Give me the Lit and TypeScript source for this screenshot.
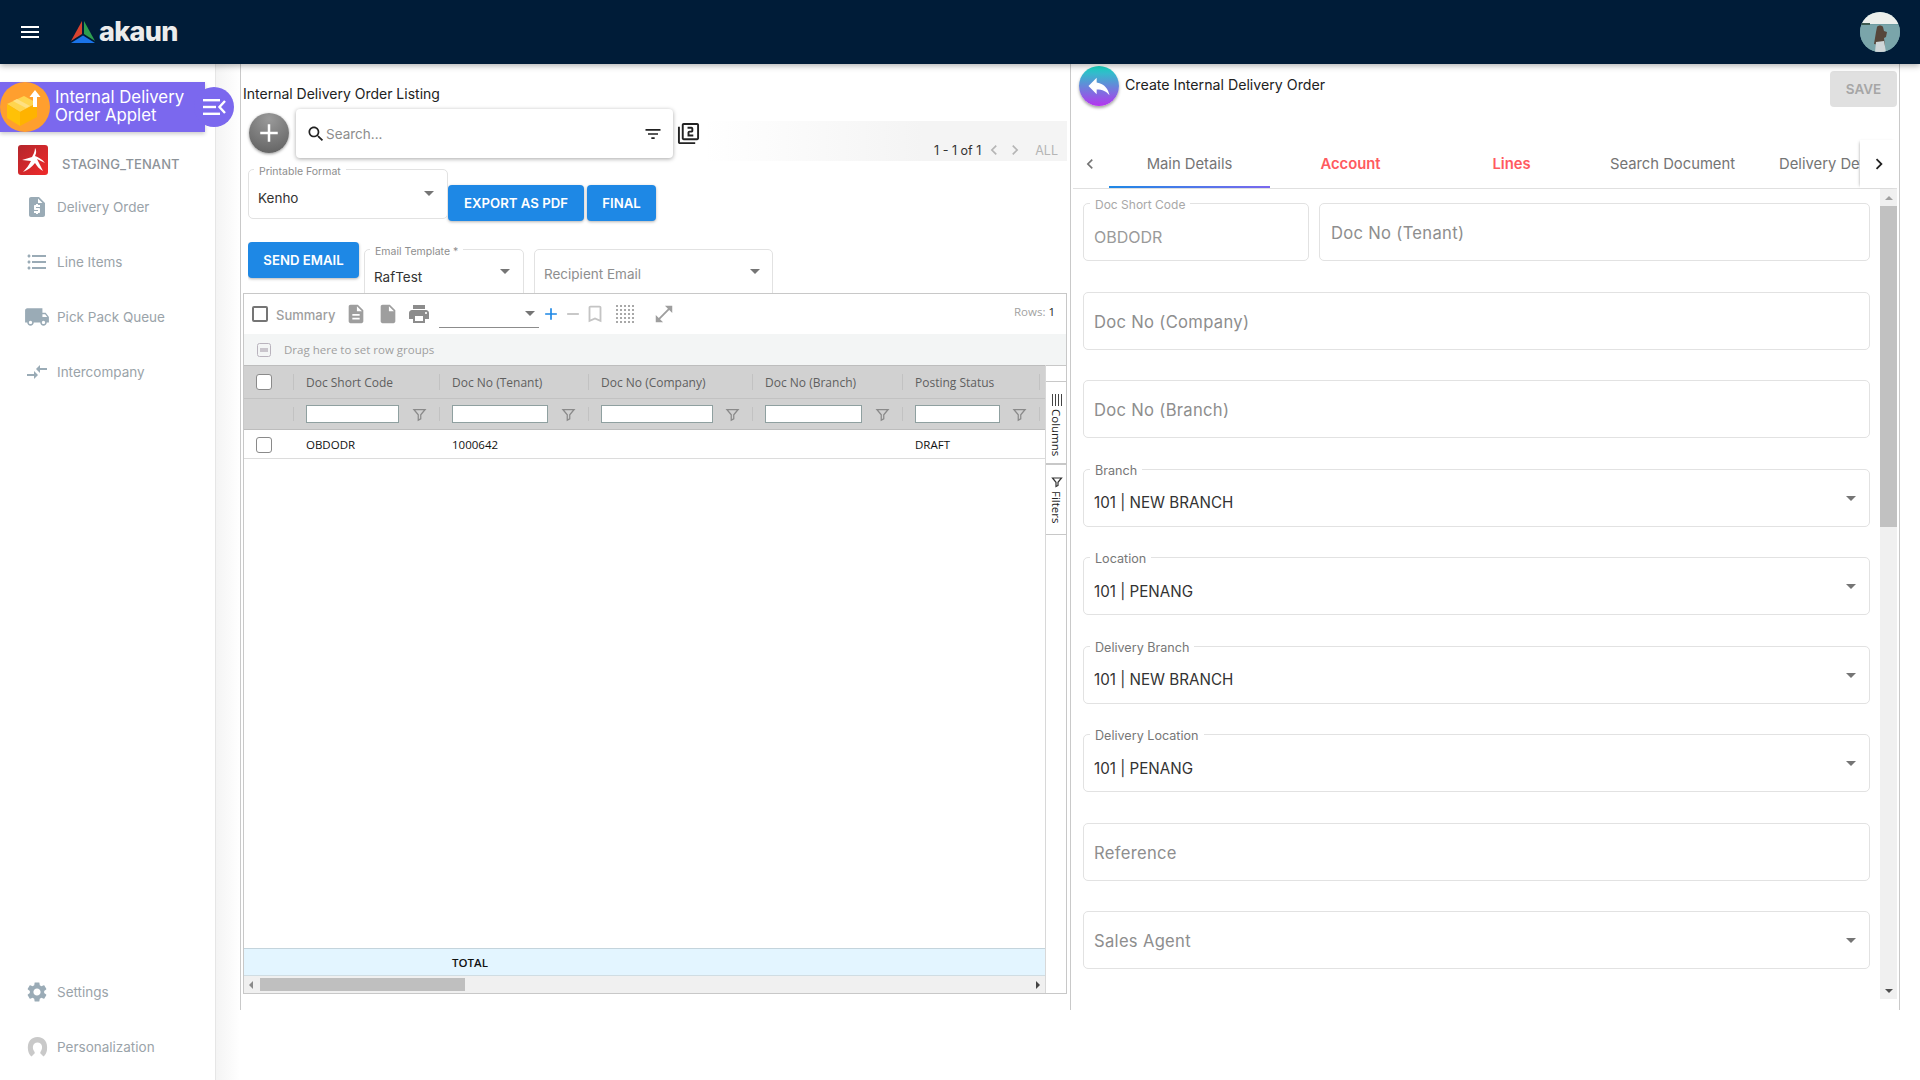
import { LitElement, html, css, svg } from 'lit';
import { customElement } from 'lit/decorators.js';

const P = {
  menu: 'M3 18h18v-2H3v2zm0-5h18v-2H3v2zm0-7v2h18V6H3z',
  search: 'M15.5 14h-.79l-.28-.27C15.41 12.59 16 11.11 16 9.5 16 5.91 13.09 3 9.5 3S3 5.91 3 9.5 5.91 16 9.5 16c1.61 0 3.09-.59 4.23-1.57l.27.28v.79l5 4.99L20.49 19l-4.99-5zm-6 0C7.01 14 5 11.99 5 9.5S7.01 5 9.5 5 14 7.01 14 9.5 11.99 14 9.5 14z',
  filterList: 'M10 18h4v-2h-4v2zM3 6v2h18V6H3zm3 7h12v-2H6v2z',
  filter2: 'M3 5H1v16c0 1.1.9 2 2 2h16v-2H3V5zm18-4H7c-1.1 0-2 .9-2 2v14c0 1.1.9 2 2 2h14c1.1 0 2-.9 2-2V3c0-1.1-.9-2-2-2zm0 16H7V3h14v14zm-4-4h-4v-2h2c1.1 0 2-.89 2-2V7c0-1.11-.9-2-2-2h-4v2h4v2h-2c-1.1 0-2 .89-2 2v4h6v-2z',
  doc: 'M14 2H6c-1.1 0-1.99.9-1.99 2L4 20c0 1.1.89 2 1.99 2H18c1.1 0 2-.9 2-2V8l-6-6zm2 16H8v-2h8v2zm0-4H8v-2h8v2zm-3-5V3.5L18.5 9H13z',
  file: 'M6 2c-1.1 0-1.99.9-1.99 2L4 20c0 1.1.89 2 1.99 2H18c1.1 0 2-.9 2-2V8l-6-6H6zm7 7V3.5L18.5 9H13z',
  print: 'M19 8H5c-1.66 0-3 1.34-3 3v6h4v4h12v-4h4v-6c0-1.66-1.34-3-3-3zm-3 11H8v-5h8v5zm3-7c-.55 0-1-.45-1-1s.45-1 1-1 1 .45 1 1-.45 1-1 1zm-1-9H6v4h12V3z',
  list: 'M4 10.5c-.83 0-1.5.67-1.5 1.5s.67 1.5 1.5 1.5 1.5-.67 1.5-1.5-.67-1.5-1.5-1.5zm0-6c-.83 0-1.5.67-1.5 1.5S3.17 7.5 4 7.5 5.5 6.83 5.5 6 4.83 4.5 4 4.5zm0 12c-.83 0-1.5.68-1.5 1.5s.68 1.5 1.5 1.5 1.5-.68 1.5-1.5-.67-1.5-1.5-1.5zM7 19h14v-2H7v2zm0-6h14v-2H7v2zm0-8v2h14V5H7z',
  truck: 'M20 8h-3V4H3c-1.1 0-2 .9-2 2v11h2c0 1.66 1.34 3 3 3s3-1.34 3-3h6c0 1.66 1.34 3 3 3s3-1.34 3-3h2v-5l-3-4zM6 18.5c-.83 0-1.5-.67-1.5-1.5s.67-1.5 1.5-1.5 1.5.67 1.5 1.5-.67 1.5-1.5 1.5zm13.5-9l1.96 2.5H17V9.5h2.5zm-1.5 9c-.83 0-1.5-.67-1.5-1.5s.67-1.5 1.5-1.5 1.5.67 1.5 1.5-.67 1.5-1.5 1.5z',
  gear: 'M19.14 12.94c.04-.3.06-.61.06-.94 0-.32-.02-.64-.07-.94l2.03-1.58c.18-.14.23-.41.12-.61l-1.92-3.32c-.12-.22-.37-.29-.59-.22l-2.39.96c-.5-.38-1.03-.7-1.62-.94l-.36-2.54c-.04-.24-.24-.41-.48-.41h-3.84c-.24 0-.43.17-.47.41l-.36 2.54c-.59.24-1.13.57-1.62.94l-2.39-.96c-.22-.08-.47 0-.59.22L2.74 8.87c-.12.21-.08.47.12.61l2.03 1.58c-.05.3-.09.63-.09.94s.02.64.07.94l-2.03 1.58c-.18.14-.23.41-.12.61l1.92 3.32c.12.22.37.29.59.22l2.39-.96c.5.38 1.03.7 1.62.94l.36 2.54c.05.24.24.41.48.41h3.84c.24 0 .44-.17.47-.41l.36-2.54c.59-.24 1.13-.56 1.62-.94l2.39.96c.22.08.47 0 .59-.22l1.92-3.32c.12-.22.07-.47-.12-.61l-2.01-1.58zM12 15.6c-1.98 0-3.6-1.62-3.6-3.6s1.62-3.6 3.6-3.6 3.6 1.62 3.6 3.6-1.62 3.6-3.6 3.6z',
  swap: 'M9.01 14H2v2h7.01v3L13 15l-3.99-4v3zm5.98-1v-3H22V8h-7.01V5L11 9l3.99 4z',
  quote: 'M14 2H6c-1.1 0-1.99.9-1.99 2L4 20c0 1.1.89 2 1.99 2H18c1.1 0 2-.9 2-2V8l-6-6zm1 10h-4v1h3c.55 0 1 .45 1 1v3c0 .55-.45 1-1 1h-1v1h-2v-1H9v-2h4v-1h-3c-.55 0-1-.45-1-1v-3c0-.55.45-1 1-1h1V9h2v1h2v2zm-2-4V3.5L17.5 8H13z',
  reply: 'M10 9V5l-7 7 7 7v-4.1c5 0 8.5 1.6 11 5.1-1-5-4-10-11-11z',
  expand: 'M21 11V3h-8l3.29 3.29-10 10L3 13v8h8l-3.29-3.29 10-10z',
  bookmark: 'M17 3H7c-1.1 0-1.99.9-1.99 2L5 21l7-3 7 3V5c0-1.1-.9-2-2-2zm0 15l-5-2.18L7 18V5h10v13z',
  plus: 'M19 13h-6v6h-2v-6H5v-2h6V5h2v6h6v2z',
  minus: 'M19 13H5v-2h14v2z',
  funnel: 'M3 4h18l-7 8.5V19l-4 2v-8.5z',
  back: 'M15.4 7.4L14 6l-6 6 6 6 1.4-1.4L10.8 12z',
  next: 'M8.6 16.6L10 18l6-6-6-6-1.4 1.4L13.2 12z',
};

const ico = (d: string, size: number, color: string) => html`<svg
  class="ico" width=${size} height=${size} viewBox="0 0 24 24" fill=${color}><path d=${d}></path></svg>`;

const funnel = () => html`<svg class="ico" width="15" height="15" viewBox="0 0 24 24" fill="none" stroke="#8a8a8a" stroke-width="2"><path d=${P.funnel}></path></svg>`;

const caret = (color = '#757575') => html`<span class="caret" style="border-top-color:${color}"></span>`;

interface FieldDef {
  label?: string;
  value?: string;
  placeholder?: string;
  select?: boolean;
}

const FIELDS: FieldDef[] = [
  { placeholder: 'Doc No (Company)' },
  { placeholder: 'Doc No (Branch)' },
  { label: 'Branch', value: '101 | NEW BRANCH', select: true },
  { label: 'Location', value: '101 | PENANG', select: true },
  { label: 'Delivery Branch', value: '101 | NEW BRANCH', select: true },
  { label: 'Delivery Location', value: '101 | PENANG', select: true },
  { placeholder: 'Reference' },
  { placeholder: 'Sales Agent', select: true },
];

const COLS = [
  { title: 'Doc Short Code', w: 93, cell: 'OBDODR' },
  { title: 'Doc No (Tenant)', w: 96, cell: '1000642' },
  { title: 'Doc No (Company)', w: 112, cell: '' },
  { title: 'Doc No (Branch)', w: 97, cell: '' },
  { title: 'Posting Status', w: 85, cell: 'DRAFT' },
];

const NAV = [
  { icon: P.quote, size: 24, label: 'Delivery Order' },
  { icon: P.list, size: 24, label: 'Line Items' },
  { icon: P.truck, size: 26, label: 'Pick Pack Queue' },
  { icon: P.swap, size: 24, label: 'Intercompany' },
];

const TABS = [
  { label: 'Main Details', cls: 'active' },
  { label: 'Account', cls: 'err' },
  { label: 'Lines', cls: 'err' },
  { label: 'Search Document', cls: '' },
  { label: 'Delivery Details', cls: '' },
];

const boxIcon = svg`
  <polygon points="7,22 24,14 37,21 20,30" fill="#ffd54f"></polygon>
  <polygon points="7,22 20,30 20,44 7,36" fill="#ffc107"></polygon>
  <polygon points="20,30 37,21 37,35 20,44" fill="#ffb300"></polygon>
  <polygon points="13,19 17,17 30,24 26,26" fill="#ffe082"></polygon>
  <path d="M35 8l5.5 7h-3.5v10h-4V15h-3.5z" fill="#fff"></path>`;

@customElement('app-root')
export class AppRoot extends LitElement {
  static styles = css`
    :host {
      display: block;
      width: 1920px;
      height: 1080px;
      overflow: hidden;
      background: #fff;
      font-family: 'Inter', 'Noto Sans', sans-serif;
      color: #333;
    }
    * { box-sizing: border-box; }
    svg.ico { display: block; flex: none; }

    .topbar {
      height: 64px;
      background: #001c38;
      display: flex;
      align-items: center;
      padding: 0 20px 0 18px;
      box-shadow: 0 2px 6px rgba(0, 0, 0, 0.3);
      position: relative;
      z-index: 3;
    }
    .logo { display: flex; align-items: center; margin-left: 28px; gap: 3px; }
    .logo span {
      font-size: 27px;
      font-weight: 800;
      letter-spacing: -0.7px;
      color: #ececec;
      margin-top: -2px;
    }
    .avatar { margin-left: auto; width: 40px; height: 40px; border-radius: 50%; overflow: hidden; }

    .body { display: flex; height: 1016px; }

    .sidebar {
      width: 216px;
      flex: none;
      display: flex;
      flex-direction: column;
      border-right: 1px solid #e6e6e6;
      padding-top: 18px;
      position: relative;
    }
    .applet {
      height: 50px;
      width: 205px;
      background: #7b68ee;
      display: flex;
      align-items: center;
      color: #fff;
      font-size: 16.8px;
      line-height: 18px;
      box-shadow: 0 2px 4px rgba(0, 0, 0, 0.2);
      position: relative;
    }
    .applet > span { margin-top: -2px; }
    .applet-ico { width: 50px; height: 50px; flex: none; margin-right: 5px; }
    .toggle {
      position: absolute;
      left: 194px;
      top: 5px;
      width: 40px;
      height: 40px;
      border-radius: 50%;
      background: #7b68ee;
      display: flex;
      align-items: center;
      justify-content: center;
      padding-left: 2px;
      z-index: 1;
    }
    .tenant {
      display: flex;
      align-items: center;
      margin: 13px 0 0 18px;
      height: 30px;
      gap: 14px;
      font-size: 13px;
      font-weight: 500;
      color: #8d9399;
      letter-spacing: 0.1px;
    }
    .tenant span { padding-top: 8px; }
    .nav { display: flex; flex-direction: column; margin-top: 4.5px; }
    .nav-item {
      height: 55px;
      display: flex;
      align-items: center;
      font-size: 13.5px;
      color: #9aa3a9;
    }
    .nav-ico { width: 57px; display: flex; justify-content: center; flex: none; padding-left: 20px; padding-right: 3px; }
    .nav-bottom { margin-top: auto; margin-bottom: 6px; }

    .gutter { width: 24px; flex: none; background: linear-gradient(90deg, #f4f4f4, #fff); }

    .panel { width: 830px; flex: none; height: 946px; border-left: 1px solid #c9c9c9; }
    .panel.right { border-right: 1px solid #c9c9c9; width: 830px; display: flex; flex-direction: column; }

    .title { margin: 20px 0 5px 2px; height: 20px; line-height: 20px; font-size: 14px; color: #222; }

    .toolbar { display: flex; height: 49px; }
    .fab {
      width: 40px;
      height: 40px;
      margin: 4px 7px 0 8px;
      border-radius: 50%;
      background: radial-gradient(circle at 50% 15%, #9a9a9a, #666 85%);
      box-shadow: 0 1px 3px rgba(0, 0, 0, 0.4);
      display: flex;
      align-items: center;
      justify-content: center;
      flex: none;
    }
    .search {
      width: 377px;
      height: 49px;
      flex: none;
      border-radius: 4px;
      box-shadow: 0 1px 4px rgba(0, 0, 0, 0.35);
      display: flex;
      align-items: center;
      padding: 0 10px 0 10px;
      font-size: 13.5px;
      color: #8d8d8d;
      background: #fff;
    }
    .search .grow { flex: 1; }
    .lib { margin: 13px 0 0 4px; }
    .band {
      flex: 1;
      margin: 12px 3px 0 5px;
      height: 40px;
      background: linear-gradient(90deg, #fff, #f4f4f4 60%);
      display: flex;
      align-items: center;
      justify-content: flex-end;
      padding: 18px 9px 0 0;
      font-size: 12.5px;
      color: #333;
      gap: 1px;
    }
    .band .all { color: #b5b5b5; margin-left: 9px; }

    .field {
      position: relative;
      border: 1px solid #e2e2e2;
      border-radius: 5px;
      height: 50px;
      background: #fff;
      flex: none;
      font-size: 13.5px;
    }
    .field label {
      position: absolute;
      left: 5px;
      top: -4px;
      padding: 0 5px;
      font-size: 10.5px;
      line-height: 12px;
      color: #8e8e8e;
      background: #fff;
      white-space: nowrap;
    }
    .field .val { position: absolute; left: 9px; top: 19px; line-height: 18px; color: #333; }
    .field .ph { position: absolute; left: 9px; top: 12px; line-height: 24px; color: #8e8e8e; }
    .field .caret { position: absolute; right: 13px; top: 21px; }
    .caret {
      display: block;
      width: 0;
      height: 0;
      border-left: 5px solid transparent;
      border-right: 5px solid transparent;
      border-top: 5px solid #757575;
    }

    .row2 { display: flex; height: 52px; margin: 11px 0 0 7px; }
    .row2 .field { width: 200px; }
    .btn {
      height: 36px;
      border-radius: 4px;
      background: #1e88e5;
      color: #fff;
      font-size: 13.2px;
      font-weight: 600;
      display: flex;
      align-items: center;
      justify-content: center;
      box-shadow: 0 1px 3px rgba(0, 0, 0, 0.3);
      flex: none;
    }
    .row2 .btn { align-self: flex-end; }
    .row3 { display: flex; height: 51px; margin: 21px 0 0 7px; overflow: hidden; padding-bottom: 0; }
    .row3 .field { margin-top: 7px; }
    .field.tpl { width: 160px; margin-left: 5px; }
    .field.tpl .val { top: 18px; }
    .field.rcp { width: 239px; margin-left: 10px; }
    .field.rcp .ph { top: 12px; }
    .field.rcp .caret { right: 12px; top: 19px; }
    .field.tpl .caret { right: 13px; top: 19px; }

    .grid {
      display: flex;
      flex-direction: column;
      width: 824px;
      height: 701px;
      margin-left: 2px;
      border: 1px solid #c8c8c8;
      font-family: 'Open Sans', 'Noto Sans', sans-serif;
      font-size: 11.5px;
    }
    .gtool { height: 40px; display: flex; align-items: center; padding-left: 8px; flex: none; font-family: 'Inter', sans-serif; }
    .cbx { width: 16px; height: 16px; border: 2px solid #757575; border-radius: 2px; flex: none; }
    .sum { font-size: 13px; font-weight: 500; color: #9e9e9e; margin: 1px 10px 0 8px; }
    .sel { width: 100px; height: 27px; border-bottom: 1px solid #8c8c8c; display: flex; align-items: center; justify-content: flex-end; padding-right: 4px; margin: 0 2px 0 8px; flex: none; }
    .rows { margin-left: auto; margin-right: 11px; font-family: 'Open Sans', sans-serif; font-size: 11.5px; color: #a2a2a2; margin-top: -6px; }
    .rows b { color: #222; font-weight: 400; }
    .gbar {
      height: 31px;
      flex: none;
      background: #f3f5f5;
      display: flex;
      align-items: center;
      padding-left: 13px;
      gap: 13px;
      color: #9f9f9f;
      font-size: 11.5px;
    }
    .gmain { flex: 1; display: flex; min-height: 0; }
    .gtable { width: 801px; display: flex; flex-direction: column; flex: none; }
    .gr {
      display: grid;
      grid-template-columns: 49px 146px 149px 164px 150px 137px 6px;
      flex: none;
    }
    .gr > div { position: relative; display: flex; align-items: center; padding-left: 13px; }
    .gr.head > div:nth-child(n + 2)::before {
      content: '';
      position: absolute;
      left: 0;
      top: 8px;
      bottom: 8px;
      width: 1px;
      background: #c2c2c2;
    }
    .gr.head { height: 33px; background: #d1d1d1; border-top: 1px solid #bdbdbd; color: #5f5f5f; font-size: 12px; }
    .gr.flt { height: 32px; border-top: 1px solid #c2c2c2; border-bottom: 1px solid #bdbdbd; }
    .gr.data { height: 29px; border-bottom: 1px solid #dcdcdc; color: #111; padding-top: 1px; }
    .ck { width: 16px; height: 16px; border: 1px solid #8a8a8a; border-radius: 3px; background: #fff; flex: none; margin-left: -1px; }
    .flt input {
      height: 18px;
      border: 1px solid #8fa0a0;
      background: #fff;
      padding: 0;
      flex: none;
      outline: none;
    }
    .flt .fn { flex: 1; display: flex; justify-content: center; }
    .gspace { flex: 1; }
    .gtotal { height: 28px; flex: none; background: #e3f5ff; border-top: 1px solid #c4d4dc; border-bottom: 1px solid #d0dde3; display: flex; align-items: center; padding-left: 208px; color: #111; font-weight: 600; }
    .hscroll { height: 17px; flex: none; background: #f0f0f0; display: flex; align-items: center; padding: 0 5px; }
    .hscroll .thumb { width: 205px; height: 13px; background: #bfbfbf; margin-left: 7px; }
    .hscroll .arr { width: 0; height: 0; border-top: 4px solid transparent; border-bottom: 4px solid transparent; }
    .hscroll .l { border-right: 4px solid #8a8a8a; }
    .hscroll .r { border-left: 4px solid #444; margin-left: auto; }
    .gside { flex: 1; display: flex; flex-direction: column; border-left: 1px solid #d8d8d8; }
    .gside .blank { height: 17px; border-top: 1px solid #c8c8c8; border-bottom: 1px solid #c8c8c8; flex: none; }
    .vtab {
      display: flex;
      align-items: center;
      writing-mode: vertical-rl;
      padding-top: 12px;
      gap: 3px;
      border-bottom: 1px solid #c8c8c8;
      color: #222;
      font-size: 11.5px;
      flex: none;
      padding-left: 1px;
    }
    .vtab.a { height: 83px; border-bottom-width: 2px; }
    .vtab.b { height: 70px; padding-top: 11px; }

    .rhead { height: 76px; flex: none; display: flex; padding: 2px 2px 0 8px; }
    .backbtn {
      width: 40px;
      height: 40px;
      border-radius: 50%;
      background: linear-gradient(180deg, #17d9c4, #b535ef);
      box-shadow: 0 2px 3px rgba(0, 0, 0, 0.35);
      display: flex;
      align-items: center;
      justify-content: center;
      flex: none;
    }
    .rtitle { margin: 9px 0 0 6px; font-size: 14.2px; line-height: 20px; color: #222; }
    .save {
      margin: 5px 0 0 auto;
      width: 67px;
      height: 36px;
      border-radius: 4px;
      background: #e0e0e0;
      color: #a6a6a6;
      font-size: 13.5px;
      font-weight: 600;
      display: flex;
      align-items: center;
      justify-content: center;
    }
    .tabs {
      height: 49px;
      flex: none;
      margin: 0 2px;
      display: flex;
      border-bottom: 1px solid #e0e0e0;
    }
    .tprev { width: 36px; flex: none; display: flex; align-items: center; justify-content: center; padding-right: 2px; }
    .tview { width: 751px; flex: none; overflow: hidden; display: flex; }
    .tab {
      width: 161px;
      flex: none;
      display: flex;
      align-items: center;
      justify-content: center;
      font-size: 14.8px;
      color: #757575;
      white-space: nowrap;
      position: relative;
    }
    .tab.active::after {
      content: '';
      position: absolute;
      left: 0;
      right: 0;
      bottom: 0;
      height: 2px;
      background: linear-gradient(90deg, #1e88e5, #7b68ee);
    }
    .tab.err { color: #ff5a5f; font-weight: 600; }
    .tnext { width: 37px; flex: none; display: flex; align-items: center; justify-content: center; box-shadow: -2px 0 3px -2px rgba(0, 0, 0, 0.35); }
    .rbody { flex: none; height: 810px; margin: 0 2px; display: flex; overflow: hidden; }
    .form { width: 807px; flex: none; padding: 14px 0 0 10px; display: flex; flex-direction: column; gap: 30.5px; }
    .form .field { height: 58px; font-size: 16.6px; width: 787px; }
    .form .field label { left: 6px; top: -6px; font-size: 12.6px; line-height: 14px; color: #777; padding: 0 5px; }
    .form .val { left: 10px; top: 22.5px; line-height: 22px; color: #333; font-size: 15.2px; }
    .form .ph { left: 10px; top: 18px; line-height: 22px; color: #8e8e8e; letter-spacing: 0.3px; }
    .form .caret { top: 26px; right: 13px; }
    .form .first { display: grid; grid-template-columns: 226px 551px; gap: 10px; }
    .form .first .field { width: auto; }
    .form .first .val { color: #9a9a9a; font-size: 16px; top: 22px; }
    .form .first label { color: #a8a8a8; font-size: 12px; }
    .form .first .ph { left: 11px; top: 18px; }
    .vscroll { width: 17px; flex: none; background: #f0f0f0; display: flex; flex-direction: column; }
    .vscroll .au, .vscroll .ad { height: 17px; flex: none; display: flex; align-items: center; justify-content: center; }
    .vscroll .thumb { height: 321px; background: #c1c1c1; }
    .vscroll .ad { margin-top: auto; }
    .tri-u { width: 0; height: 0; border-left: 4px solid transparent; border-right: 4px solid transparent; border-bottom: 4px solid #a0a0a0; }
    .tri-d { width: 0; height: 0; border-left: 4px solid transparent; border-right: 4px solid transparent; border-top: 4px solid #505050; }
  `;

  private renderField(f: FieldDef) {
    return html`<div class="field">
      ${f.label ? html`<label>${f.label}</label>` : ''}
      ${f.value ? html`<span class="val">${f.value}</span>` : ''}
      ${f.placeholder ? html`<span class="ph">${f.placeholder}</span>` : ''}
      ${f.select ? caret() : ''}
    </div>`;
  }

  private renderTopbar() {
    return html`<div class="topbar">
      ${ico(P.menu, 24, '#fff')}
      <div class="logo">
        <svg width="26" height="24" viewBox="0 0 26 24">
          <polygon points="12,1 12,14 1,21" fill="#d8432f"></polygon>
          <polygon points="14,1 25,21 14,14" fill="#2e9e4f"></polygon>
          <polygon points="13,15.5 25,23 1,23" fill="#1a73e8"></polygon>
        </svg>
        <span>akaun</span>
      </div>
      <div class="avatar">
        <svg width="40" height="40" viewBox="0 0 40 40">
          <rect width="40" height="40" fill="#6f9ea3"></rect>
          <rect width="40" height="12" fill="#ecefec"></rect>
          <rect x="1" y="11" width="9" height="2" fill="#3d5a50"></rect>
          <rect y="13" width="40" height="27" fill="#7aa5aa"></rect>
          <path d="M14 32l2-12 1-5c1-2 5-2 6 0l1 4 3 1-1 5-2 1 1 8z" fill="#56463a"></path>
          <path d="M15 40l1-10 8-1 2 11z" fill="#cfd6d8"></path>
        </svg>
      </div>
    </div>`;
  }

  private renderSidebar() {
    return html`<div class="sidebar">
      <div class="applet">
        <svg class="applet-ico" viewBox="0 0 50 50">
          <circle cx="25" cy="25" r="25" fill="#ff9f2e"></circle>
          ${boxIcon}
        </svg>
        <span>Internal Delivery<br />Order Applet</span>
        <div class="toggle">
          <svg width="24" height="18" viewBox="0 0 24 18" fill="#fff">
            <rect x="0" y="1" width="17" height="2.4"></rect>
            <rect x="0" y="7.8" width="13" height="2.4"></rect>
            <rect x="0" y="14.6" width="17" height="2.4"></rect>
            <path d="M22 3l-5.5 6 5.5 6" fill="none" stroke="#fff" stroke-width="2.4"></path>
          </svg>
        </div>
      </div>
      <div class="tenant">
        <svg width="30" height="30" viewBox="0 0 30 30">
          <defs>
            <linearGradient id="tg" x1="0" y1="0" x2="1" y2="1">
              <stop offset="0" stop-color="#b3262c"></stop>
              <stop offset="1" stop-color="#f02a2a"></stop>
            </linearGradient>
          </defs>
          <rect width="30" height="30" rx="3" fill="url(#tg)"></rect>
          <path d="M17 3C17 7 15 10 14 12L4 15 13 16C11 20 8 24 5 27 10 25 14 22 17 18 19 21 21 24 25 26 23 22 21 18 19 14L27 18C24 14 20 12 17 11 18 9 19 6 17 3Z" fill="#fff"></path>
        </svg>
        <span>STAGING_TENANT</span>
      </div>
      <div class="nav">
        ${NAV.map(n => html`<div class="nav-item">
          <div class="nav-ico">${ico(n.icon, n.size, '#9aabb6')}</div>${n.label}
        </div>`)}
      </div>
      <div class="nav nav-bottom">
        <div class="nav-item"><div class="nav-ico">${ico(P.gear, 24, '#9aabb6')}</div>Settings</div>
        <div class="nav-item">
          <div class="nav-ico">
            <svg width="21" height="21" viewBox="0 0 21 21">
              <path d="M1 14C0 6 4 1 10.5 1S21 6 20 14c-.5 3-1.5 5-3.5 6.5L14 18c-1-.6-1-1.5 0-3 2-3 1.500-8.500-3.500-8.500S5 12 7 15c1 1.500 1 2.400 0 3l-2.500 2.500C2.500 19 1.500 17 1 14z" fill="#c9c9c9"></path>
            </svg>
          </div>Personalization
        </div>
      </div>
    </div>`;
  }

  private renderGrid() {
    return html`<div class="grid">
      <div class="gtool">
        <div class="cbx"></div>
        <span class="sum">Summary</span>
        ${ico(P.doc, 22, '#9e9e9e')}
        <span style="width:10px"></span>
        ${ico(P.file, 22, '#9e9e9e')}
        <span style="width:8px"></span>
        ${ico(P.print, 24, '#8c8c8c')}
        <div class="sel">${caret()}</div>
        ${ico(P.plus, 20, '#1e88e5')}
        <span style="width:2px"></span>
        ${ico(P.minus, 20, '#bdbdbd')}
        <span style="width:1px"></span>
        ${ico(P.bookmark, 22, '#c4c4c4')}
        <span style="width:9px"></span>
        <svg class="ico" width="20" height="20" viewBox="0 0 20 20" fill="#a8a8a8">
          ${[1, 5, 9, 13, 17].map(y => [1, 5, 9, 13, 17].map(x => svg`<rect x=${x} y=${y} width="2" height="2"></rect>`))}
        </svg>
        <span style="width:18px"></span>
        ${ico(P.expand, 22, '#9e9e9e')}
        <span class="rows">Rows: <b>1</b></span>
      </div>
      <div class="gbar">
        <svg class="ico" width="14" height="14" viewBox="0 0 14 14" fill="none" stroke="#b9b3bd">
          <rect x="0.5" y="0.5" width="13" height="13" rx="2"></rect>
          <rect x="3" y="5" width="8" height="4" fill="#c9c5cc" stroke="none"></rect>
        </svg>
        Drag here to set row groups
      </div>
      <div class="gmain">
        <div class="gtable">
          <div class="gr head">
            <div><span class="ck"></span></div>
            ${COLS.map(c => html`<div>${c.title}</div>`)}
            <div></div>
          </div>
          <div class="gr head flt">
            <div></div>
            ${COLS.map(c => html`<div>
              <input style="width:${c.w}px" /><span class="fn">${funnel()}</span>
            </div>`)}
            <div></div>
          </div>
          <div class="gr data">
            <div><span class="ck"></span></div>
            ${COLS.map(c => html`<div>${c.cell}</div>`)}
            <div></div>
          </div>
          <div class="gspace"></div>
          <div class="gtotal">TOTAL</div>
          <div class="hscroll">
            <span class="arr l"></span><span class="thumb"></span><span class="arr r"></span>
          </div>
        </div>
        <div class="gside">
          <div class="blank"></div>
          <div class="vtab a">
            <svg class="ico" width="12" height="12" viewBox="0 0 12 12" fill="#444">
              <rect x="1" y="0" width="1" height="12"></rect>
              <rect x="4" y="0" width="1" height="12"></rect>
              <rect x="7" y="0" width="1" height="12"></rect>
              <rect x="10" y="0" width="1" height="12"></rect>
            </svg>
            Columns
          </div>
          <div class="vtab b">
            <svg class="ico" width="12" height="12" viewBox="0 0 24 24" fill="none" stroke="#333" stroke-width="2.4"><path d=${P.funnel}></path></svg>
            Filters
          </div>
        </div>
      </div>
    </div>`;
  }

  private renderLeft() {
    return html`<div class="panel">
      <div class="title">Internal Delivery Order Listing</div>
      <div class="toolbar">
        <div class="fab">${ico(P.plus, 30, '#fff')}</div>
        <div class="search">
          ${ico(P.search, 20, '#222')}
          <span class="grow">Search...</span>
          ${ico(P.filterList, 20, '#222')}
        </div>
        <div class="lib">${ico(P.filter2, 23, '#222')}</div>
        <div class="band">
          1 - 1 of 1
          <span style="width:1px"></span>
          ${ico(P.back, 20, '#b5b5b5')}
          ${ico(P.next, 20, '#b5b5b5')}
          <span class="all">ALL</span>
        </div>
      </div>
      <div class="row2">
        <div class="field"><label>Printable Format</label><span class="val">Kenho</span>${caret()}</div>
        <div class="btn" style="width:136px">EXPORT AS PDF</div>
        <div class="btn" style="width:69px;margin-left:3px">FINAL</div>
      </div>
      <div class="row3">
        <div class="btn" style="width:111px">SEND EMAIL</div>
        <div class="field tpl"><label>Email Template *</label><span class="val">RafTest</span>${caret()}</div>
        <div class="field rcp"><span class="ph">Recipient Email</span>${caret()}</div>
      </div>
      ${this.renderGrid()}
    </div>`;
  }

  private renderRight() {
    return html`<div class="panel right">
      <div class="rhead">
        <div class="backbtn">${ico(P.reply, 28, '#fff')}</div>
        <div class="rtitle">Create Internal Delivery Order</div>
        <div class="save">SAVE</div>
      </div>
      <div class="tabs">
        <div class="tprev">${ico(P.back, 20, '#757575')}</div>
        <div class="tview">
          ${TABS.map(t => html`<div class="tab ${t.cls}">${t.label}</div>`)}
        </div>
        <div class="tnext">${ico(P.next, 22, '#222')}</div>
      </div>
      <div class="rbody">
        <div class="form">
          <div class="first">
            ${this.renderField({ label: 'Doc Short Code', value: 'OBDODR' })}
            ${this.renderField({ placeholder: 'Doc No (Tenant)' })}
          </div>
          ${FIELDS.map(f => this.renderField(f))}
        </div>
        <div class="vscroll">
          <div class="au"><span class="tri-u"></span></div>
          <div class="thumb"></div>
          <div class="ad"><span class="tri-d"></span></div>
        </div>
      </div>
    </div>`;
  }

  render() {
    return html`
      ${this.renderTopbar()}
      <div class="body">
        ${this.renderSidebar()}
        <div class="gutter"></div>
        ${this.renderLeft()}
        ${this.renderRight()}
      </div>
    `;
  }
}

declare global {
  interface HTMLElementTagNameMap {
    'app-root': AppRoot;
  }
}
